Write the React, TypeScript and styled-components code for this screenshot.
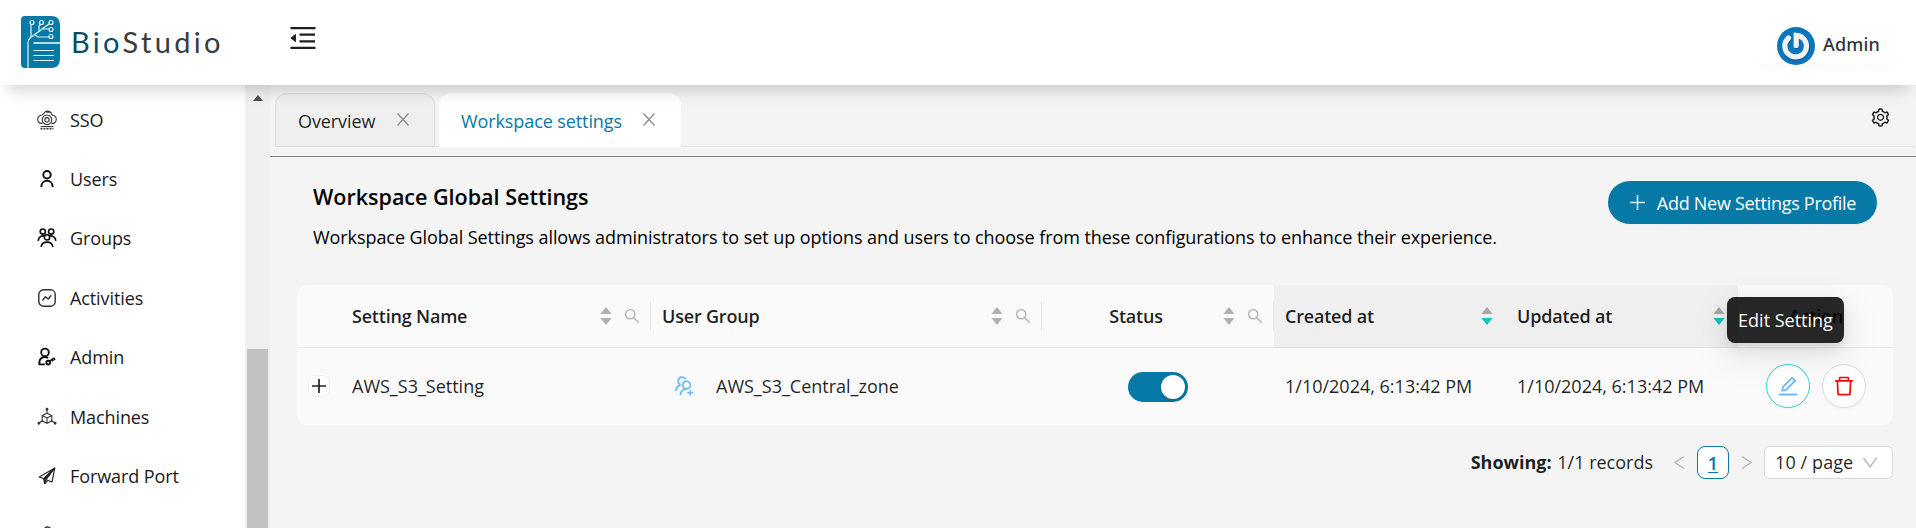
import React from "react";
import styled, { createGlobalStyle, css } from "styled-components";
import {
  AiOutlineMenuFold,
  AiOutlineSetting,
  AiOutlineSearch,
  AiOutlineEdit,
  AiOutlineDelete,
  AiOutlineUsergroupAdd,
} from "react-icons/ai";

const BLUE = "#0679a6";

const GlobalStyle = createGlobalStyle`
  *, *::before, *::after { box-sizing: border-box; }
  body {
    margin: 0;
    overflow: hidden;
    background: #f4f4f4;
    color: rgba(0, 0, 0, 0.88);
    font-family: "Open Sans", "Noto Sans", sans-serif;
    font-size: 18px;
    line-height: 28px;
  }
  svg { display: block; flex: none; }
`;

const Page = styled.div`
  display: flex;
  flex-direction: column;
  height: 528px;
  overflow: hidden;
`;

const Header = styled.header`
  position: relative;
  z-index: 2;
  display: flex;
  flex: none;
  align-items: flex-start;
  height: 85px;
  padding: 16px 16px 0 21px;
  background: #fff;
  box-shadow: 0 12px 16px -8px rgba(0, 0, 0, 0.2);
`;

const Brand = styled.div`
  display: flex;
  align-items: center;
  width: 265px;
  gap: 10px;
`;

const BrandName = styled.span`
  font-family: Lato, sans-serif;
  font-size: 29px;
  line-height: 50px;
  letter-spacing: 3.35px;
  color: #3b3b3b;
  em {
    font-style: normal;
    color: #084c68;
  }
`;

const FoldButton = styled.button`
  display: flex;
  margin: 6px 0 0 1px;
  padding: 0;
  border: 0;
  background: none;
  color: #1f1f1f;
`;

const Account = styled.div`
  display: flex;
  align-items: flex-start;
  width: 144px;
  height: 49px;
  margin-left: auto;
  padding: 11px 0 0 21px;
  gap: 8px;
  border-radius: 8px;
  box-shadow: 0 2px 0 rgba(0, 0, 0, 0.02);
`;

const AccountName = styled.span`
  margin-top: 3px;
  font-family: "Noto Sans", sans-serif;
  font-weight: 500;
  letter-spacing: 0.15px;
  color: #333;
`;

const Body = styled.div`
  display: flex;
  flex: 1;
  min-height: 0;
`;

const Sidebar = styled.nav`
  display: flex;
  flex: none;
  flex-direction: column;
  width: 245px;
  padding-top: 5px;
  background: #fff;
  overflow: hidden;
`;

const MenuItem = styled.a`
  display: flex;
  flex: none;
  align-items: center;
  height: 59.4px;
  padding-left: 37px;
  gap: 13px;
  color: #1a1a1a;
  letter-spacing: -0.1px;
`;

const Scrollbar = styled.div`
  display: flex;
  flex: none;
  flex-direction: column;
  align-items: center;
  justify-content: space-between;
  width: 25px;
  padding-top: 10px;
  background: #f0f0f0;
`;

const ScrollArrow = styled.i`
  border: 5.5px solid transparent;
  border-top: 0;
  border-bottom: 6px solid #505050;
`;

const ScrollThumb = styled.div`
  width: 21px;
  height: 179px;
  background: #c1c1c1;
`;

const Main = styled.main`
  flex: 1;
  min-width: 0;
`;

const TabBar = styled.div`
  display: flex;
  align-items: flex-start;
  height: 72px;
  padding: 8px 1px 0 5px;
  border-bottom: 1px solid #808080;
`;

const Tab = styled.div<{ $active?: boolean; $w: number }>`
  display: flex;
  align-items: center;
  justify-content: space-between;
  width: ${(p) => p.$w}px;
  height: 54px;
  padding: 2px 25px 0 22px;
  padding-left: ${(p) => (p.$active ? 21 : 22)}px;
  border: 1px solid ${(p) => (p.$active ? "#fff" : "#dcdcdc")};
  border-radius: 12px 12px 0 0;
  background: ${(p) => (p.$active ? "#fff" : "#efefef")};
  color: ${(p) => (p.$active ? BLUE : "rgba(0,0,0,.88)")};
  span { letter-spacing: -0.1px; }
  svg { margin-top: -3px; }
`;

const TabSpace = styled.div<{ $grow?: boolean }>`
  display: flex;
  justify-content: flex-end;
  width: 4px;
  flex: ${(p) => (p.$grow ? 1 : "none")};
  height: 54px;
  padding: ${(p) => (p.$grow ? "14px 24px 0 0" : 0)};
  border-bottom: 1px solid #e3e3e3;
`;

const Intro = styled.section`
  display: flex;
  justify-content: space-between;
  padding: 24px 39px 0 43px;
  height: 128px;
`;

const Title = styled.h1`
  margin: 0;
  font-size: 21.5px;
  font-weight: 600;
  line-height: 32px;
  color: #000;
`;

const Description = styled.p`
  margin: 10px 0 0;
  white-space: nowrap;
  line-height: 28px;
  letter-spacing: -0.073px;
  color: #000;
`;

const AddButton = styled.button`
  display: flex;
  align-items: center;
  justify-content: center;
  width: 269px;
  height: 43px;
  padding: 0 5px 0 6px;
  gap: 12px;
  border: 0;
  border-radius: 22px;
  background: ${BLUE};
  box-shadow: 0 2px 0 rgba(0, 0, 0, 0.02);
  color: #fff;
  font: inherit;
  letter-spacing: -0.28px;
`;

const grid = css`
  display: grid;
  grid-template-columns: 44px 310px 391px 232px 232px 232px 155px;
`;

const Table = styled.section`
  margin: 0 23px 0 27px;
  border-radius: 10px;
  background: #fafafa;
`;

const HeadRow = styled.div`
  ${grid}
  height: 63px;
`;

const HeadCell = styled.div<{ $sorted?: boolean; $divider?: boolean; $center?: boolean }>`
  position: relative;
  display: flex;
  align-items: center;
  padding: 0 10px 0 11px;
  border-bottom: 1px solid ${(p) => (p.$sorted ? "#dfdfdf" : "#e9e9e9")};
  background: ${(p) => (p.$sorted ? "#efefef" : "transparent")};
  font-weight: 600;
  letter-spacing: -0.2px;
  > span {
    flex: 1;
    padding-right: ${(p) => (p.$center && p.$divider ? 4 : 0)}px;
    text-align: ${(p) => (p.$center ? "center" : "left")};
  }
  ${(p) =>
    p.$divider &&
    css`
      &::after {
        content: "";
        position: absolute;
        right: 0;
        top: 16px;
        width: 1px;
        height: 30px;
        background: #e8e8e8;
      }
    `}
`;

const Tools = styled.div<{ $offset?: boolean }>`
  display: flex;
  align-items: center;
  gap: 11px;
  padding-right: ${(p) => (p.$offset ? 3 : 0)}px;
  color: #b3b3b3;
  svg { margin-top: -1px; }
`;

const DataRow = styled.div`
  ${grid}
  height: 77px;
`;

const Cell = styled.div<{ $center?: boolean; $gap?: number; $pad?: number }>`
  display: flex;
  align-items: center;
  justify-content: ${(p) => (p.$center ? "center" : "flex-start")};
  gap: ${(p) => p.$gap ?? 0}px;
  padding-left: ${(p) => p.$pad ?? 11}px;
  padding-bottom: ${(p) => (p.$center ? 0 : 2)}px;
  white-space: nowrap;
`;

const ExpandButton = styled.button`
  display: flex;
  align-items: center;
  justify-content: center;
  width: 22px;
  height: 22px;
  padding: 0;
  border: 1px solid #f0f0f0;
  border-radius: 7px;
  background: #fff;
`;

const Switch = styled.div`
  display: flex;
  justify-content: flex-end;
  width: 60px;
  height: 30px;
  padding: 3px;
  border-radius: 15px;
  background: ${BLUE};
  &::after {
    content: "";
    width: 24px;
    height: 24px;
    border-radius: 50%;
    background: #fff;
    box-shadow: 0 2px 4px rgba(0, 35, 11, 0.2);
  }
`;

const ActionButton = styled.button<{ $tone: string; $edge: string }>`
  position: relative;
  display: flex;
  align-items: center;
  justify-content: center;
  width: 44px;
  height: 44px;
  padding: 0;
  border: 1px solid ${(p) => p.$edge};
  border-radius: 50%;
  background: #fff;
  box-shadow: 0 2px 0 rgba(0, 0, 0, 0.02);
  color: ${(p) => p.$tone};
`;

const Tooltip = styled.div`
  position: absolute;
  z-index: 3;
  left: -40px;
  bottom: 64px;
  width: 117px;
  height: 46px;
  border-radius: 8px;
  background: rgba(0, 0, 0, 0.85);
  box-shadow: 0 8px 20px rgba(0, 0, 0, 0.08), 0 4px 8px -4px rgba(0, 0, 0, 0.12),
    0 12px 36px 8px rgba(0, 0, 0, 0.05);
  color: #fff;
  font: 18px/46px "Open Sans", sans-serif;
  text-align: center;
`;

const Footer = styled.footer`
  display: flex;
  align-items: center;
  justify-content: flex-end;
  height: 33px;
  margin: 21px 23px 0 0;
`;

const Records = styled.span`
  margin: -2px 21px 0 0;
  b { margin-right: 1px; }
`;

const PageNumber = styled.a`
  display: flex;
  align-items: center;
  justify-content: center;
  width: 32px;
  height: 33px;
  margin: 0 12px 0 12px;
  border: 1px solid ${BLUE};
  border-radius: 8px;
  background: #fff;
  color: ${BLUE};
  font-weight: 600;
  text-decoration: underline;
  text-underline-offset: 2px;
`;

const PageSize = styled.div`
  display: flex;
  align-items: center;
  justify-content: space-between;
  width: 129px;
  height: 33px;
  margin-left: 12px;
  padding: 0 15px 1px 10px;
  border: 1px solid #d9d9d9;
  border-radius: 5px;
  background: #fff;
  letter-spacing: 0.1px;
`;

const Stroke = ({
  size = 20,
  width = 1.6,
  color = "currentColor",
  children,
}: {
  size?: number;
  width?: number;
  color?: string;
  children: React.ReactNode;
}) => (
  <svg width={size} height={size} viewBox="0 0 20 20" fill="none" stroke={color} strokeWidth={width}>
    {children}
  </svg>
);

const Logo = () => (
  <svg width="40" height="52" viewBox="0 0 40 52" fill="none" stroke="#e8f3f7" strokeWidth="1.2">
    <path d="M4 0H30Q39 0 39 9V43Q39 52 30 52H4Q0 52 0 48V4Q0 0 4 0Z" fill={BLUE} stroke="none" />
    <path d="M7 52V27Q7 24 9 22L28 8M10 21V9M18 15V10L20 8M21 13L29 13M14 19L17 21H28" />
    <path d="M12.5 27H39" strokeWidth="1.6" />
    <path d="M12.5 34.5H33M12.5 39.5H33M12.5 44.5H33" />
    <g fill={BLUE}>
      <circle cx="11" cy="6.5" r="2" />
      <circle cx="20.5" cy="6.5" r="2" />
      <circle cx="30" cy="6.5" r="2" />
      <circle cx="30" cy="13.5" r="2" />
      <circle cx="30" cy="20.5" r="2" />
    </g>
  </svg>
);

const Avatar = () => (
  <svg width="38" height="38" viewBox="0 0 38 38" fill="none">
    <circle cx="19" cy="19" r="19" fill="#0b76bb" />
    <path
      d="M19.5 19V8.5A11 11 0 1 1 11.5 11.2"
      stroke="#0a5c94"
      strokeWidth="5.5"
      strokeLinecap="round"
      opacity=".6"
      transform="translate(.6 .8)"
    />
    <path d="M19.2 18.5V8.3A10.8 10.8 0 1 1 11.5 11" stroke="#f2f2f2" strokeWidth="5.2" strokeLinecap="round" />
  </svg>
);

const SsoIcon = () => (
  <Stroke width={1.1} color="#333">
    <path d="M5.6 13.2C-.8 14.6-.8 4.8 4.9 5.2M15.1 5.2C20.8 4.8 20.8 14.6 14.4 13.2M5 5.2C6.2 4 7 3.8 7.4 2.8C9 .2 14.4 .6 15 5.2M9.5 2.4L13 2" />
    <circle cx="10" cy="9.8" r="4.8" />
    <circle cx="10" cy="9.8" r="2.2" />
    <path d="M3.5 16.6H16.5" />
    <path d="M3.5 18.8H16.5" strokeWidth="1.6" strokeDasharray="2 1" />
  </Stroke>
);

const UserIcon = () => (
  <Stroke width={2} color="#111">
    <circle cx="10" cy="5.8" r="3.7" />
    <path d="M4.3 18C4.3 9.8 15.7 9.8 15.7 18" />
  </Stroke>
);

const GroupsIcon = () => (
  <Stroke width={1.7} color="#111">
    <circle cx="5.8" cy="3.6" r="2.6" />
    <circle cx="14.2" cy="3.6" r="2.6" />
    <circle cx="10" cy="9.3" r="2.7" />
    <path d="M1.2 12.8C1.6 9.3 4 7.5 7.4 8M18.8 12.8C18.4 9.3 16 7.5 12.6 8M4.2 19C4.8 12.4 15.2 12.4 15.8 19" />
  </Stroke>
);

const ActivityIcon = () => (
  <Stroke width={1.4} color="#2c2f36">
    <rect x="1.8" y="1.8" width="16.4" height="16.4" rx="4.8" />
    <path d="M5.8 12L8.4 8.8L11.2 11L14 7.8" strokeLinecap="round" strokeLinejoin="round" />
  </Stroke>
);

const AdminIcon = () => (
  <Stroke width={1.9} color="#111">
    <circle cx="8" cy="5.4" r="3.8" />
    <path d="M7.8 17.4H2.4C2 13.8 3.2 11.4 6 10.2Q9 9.6 11 11" />
    <circle cx="11.2" cy="15.6" r="1.9" />
    <path d="M12.6 14.2L16.8 11.3L18 13M15 12.6L16.2 14.2" strokeWidth="1.6" />
  </Stroke>
);

const MachinesIcon = () => (
  <Stroke width={1.1} color="#333">
    <path d="M10 6.2L14.8 8.6V13.8L10 16.4L5.2 13.8V8.6ZM5.2 8.6L10 11L14.8 8.6M10 11V16.4M10 6V2M5.2 13.8L2 16M14.8 13.8L18 16" />
    <g fill="#333">
      <circle cx="10" cy="2.3" r="0.9" />
      <circle cx="1.9" cy="16.3" r="0.9" />
      <circle cx="18.1" cy="16.3" r="0.9" />
    </g>
  </Stroke>
);

const ForwardIcon = () => (
  <Stroke width={1.2} color="#222">
    <path d="M17.8 2L2.2 11L6.8 12.8L17.8 2L15 16L9.8 14" strokeLinejoin="round" />
    <path d="M6.8 12.8L17.8 2L9 13.6L7.6 17.8Z" fill="#222" />
    <path d="M7.6 17.8L10.6 14.4" />
  </Stroke>
);

const CloudIcon = () => (
  <Stroke width={1.3} color="#333">
    <path d="M7.5 4C8 1.6 12 1.2 13.6 3.6C17 3.4 18.5 6 17 9H3C1.6 6.6 4 3.6 7.5 4Z" />
  </Stroke>
);

const Cross = () => (
  <svg width="12" height="13" viewBox="0 0 12 13" stroke="#8c8c8c" strokeWidth="1.3">
    <path d="M.5 .5L11.5 12.5M11.5 .5L.5 12.5" />
  </svg>
);

const Plus = ({ size, color, width }: { size: number; color: string; width: number }) => (
  <svg width={size} height={size} viewBox="0 0 14 14" stroke={color} strokeWidth={width}>
    <path d="M7 0V14M0 7H14" />
  </svg>
);

const Angle = ({ d, w, h }: { d: string; w: number; h: number }) => (
  <svg width={w} height={h} viewBox={`0 0 ${w} ${h}`} fill="none" stroke="#b8b8b8" strokeWidth="1.4">
    <path d={d} />
  </svg>
);

const Sorter = ({ desc }: { desc?: boolean }) => (
  <svg width="12" height="18" viewBox="0 0 12 18">
    <path d="M6 0L11.6 7H.4Z" fill={desc ? "#a6a6a6" : "#b0b0b0"} />
    <path d="M6 18L11.6 11H.4Z" fill={desc ? "#13c2c2" : "#b0b0b0"} />
  </svg>
);

const SearchTools = () => (
  <Tools>
    <Sorter />
    <AiOutlineSearch size={18} />
  </Tools>
);

const MENU = [
  { label: "SSO", icon: <SsoIcon /> },
  { label: "Users", icon: <UserIcon /> },
  { label: "Groups", icon: <GroupsIcon /> },
  { label: "Activities", icon: <ActivityIcon /> },
  { label: "Admin", icon: <AdminIcon /> },
  { label: "Machines", icon: <MachinesIcon /> },
  { label: "Forward Port", icon: <ForwardIcon /> },
];

export default function App() {
  return (
    <Page>
      <GlobalStyle />
      <Header>
        <Brand>
          <Logo />
          <BrandName>
            <em>Bio</em>Studio
          </BrandName>
        </Brand>
        <FoldButton aria-label="Collapse menu">
          <AiOutlineMenuFold size={32} />
        </FoldButton>
        <Account>
          <Avatar />
          <AccountName>Admin</AccountName>
        </Account>
      </Header>
      <Body>
        <Sidebar>
          {MENU.map((m) => (
            <MenuItem key={m.label}>
              {m.icon}
              {m.label}
            </MenuItem>
          ))}
          <MenuItem>
            <CloudIcon />
          </MenuItem>
        </Sidebar>
        <Scrollbar>
          <ScrollArrow />
          <ScrollThumb />
        </Scrollbar>
        <Main>
          <TabBar>
            <Tab $w={160}>
              <span>Overview</span>
              <Cross />
            </Tab>
            <TabSpace />
            <Tab $w={242} $active>
              <span>Workspace settings</span>
              <Cross />
            </Tab>
            <TabSpace $grow>
              <AiOutlineSetting size={21} />
            </TabSpace>
          </TabBar>
          <Intro>
            <div>
              <Title>Workspace Global Settings</Title>
              <Description>
                Workspace Global Settings allows administrators to set up options and users to choose from these
                configurations to enhance their experience.
              </Description>
            </div>
            <AddButton>
              <Plus size={15} color="#e6f2f7" width={1.4} />
              Add New Settings Profile
            </AddButton>
          </Intro>
          <Table>
            <HeadRow>
              <HeadCell />
              <HeadCell $divider>
                <span>Setting Name</span>
                <SearchTools />
              </HeadCell>
              <HeadCell $divider>
                <span>User Group</span>
                <SearchTools />
              </HeadCell>
              <HeadCell $divider $center>
                <span>Status</span>
                <SearchTools />
              </HeadCell>
              <HeadCell $sorted>
                <span>Created at</span>
                <Tools $offset>
                  <Sorter desc />
                </Tools>
              </HeadCell>
              <HeadCell $sorted>
                <span>Updated at</span>
                <Tools $offset>
                  <Sorter desc />
                </Tools>
              </HeadCell>
              <HeadCell $center>
                <span>Action</span>
              </HeadCell>
            </HeadRow>
            <DataRow>
              <Cell>
                <ExpandButton aria-label="Expand row">
                  <Plus size={14} color="#222" width={1.7} />
                </ExpandButton>
              </Cell>
              <Cell>AWS_S3_Setting</Cell>
              <Cell $gap={20} $pad={21}>
                <AiOutlineUsergroupAdd size={24} color="#69b9ff" />
                AWS_S3_Central_zone
              </Cell>
              <Cell $center $pad={0}>
                <Switch />
              </Cell>
              <Cell>1/10/2024, 6:13:42 PM</Cell>
              <Cell>1/10/2024, 6:13:42 PM</Cell>
              <Cell $pad={28} $gap={12}>
                <ActionButton $tone="#69b9ff" $edge="#36cfc9" aria-label="Edit">
                  <AiOutlineEdit size={24} />
                  <Tooltip>Edit Setting</Tooltip>
                </ActionButton>
                <ActionButton $tone="#f5080c" $edge="#d9d9d9" aria-label="Delete">
                  <AiOutlineDelete size={24} />
                </ActionButton>
              </Cell>
            </DataRow>
          </Table>
          <Footer>
            <Records>
              <b>Showing:</b> 1/1 records
            </Records>
            <Angle d="M10 .5L1 6.5L10 12.5" w={11} h={13} />
            <PageNumber>1</PageNumber>
            <Angle d="M1 .5L10 6.5L1 12.5" w={11} h={13} />
            <PageSize>
              10 / page
              <Angle d="M.5 1L7 10L13.5 1" w={14} h={11} />
            </PageSize>
          </Footer>
        </Main>
      </Body>
    </Page>
  );
}
